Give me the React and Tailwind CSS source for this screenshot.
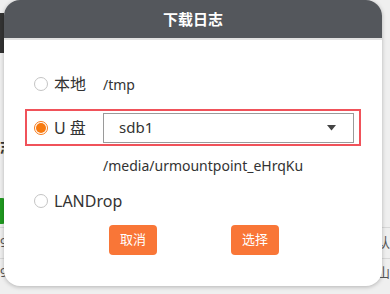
import React from "react";

function Radio({ checked }) {
  return checked ? (
    <span className="flex h-[14px] w-[14px] items-center justify-center rounded-full border border-[#f77a1a] bg-white">
      <span className="h-[10px] w-[10px] rounded-full bg-[#f77a0f]" />
    </span>
  ) : (
    <span className="h-[14px] w-[14px] rounded-full border border-[#c4c4c4] bg-white" />
  );
}

export default function App() {
  return (
    <div
      className="relative h-[294px] w-[390px] overflow-hidden bg-[#efefef]"
      style={{ fontFamily: '"Noto Sans", "Noto Sans CJK SC", sans-serif' }}
    >
      {/* background page fragments */}
      <div className="absolute left-0 top-[13px] h-[40px] w-[6px] bg-[#333]" />
      <div className="absolute left-0 top-[140px] text-[15px] font-bold leading-none text-[#333]">志</div>
      <div className="absolute left-0 top-[198px] h-[26px] w-[6px] rounded-r bg-[#1f9a1f]" />
      <div className="absolute left-0 right-0 top-[227px] h-px bg-[#d8d8d8]" />
      <div className="absolute left-0 right-0 top-[258px] h-px bg-[#d8d8d8]" />
      <div className="absolute left-0 top-[236px] text-[13px] leading-none text-[#555]">9</div>
      <div className="absolute left-0 top-[266px] text-[13px] leading-none text-[#555]">9</div>
      <div className="absolute right-0 top-[236px] text-[13px] leading-none text-[#555]">认</div>
      <div className="absolute right-0 top-[266px] text-[13px] leading-none text-[#555]">山</div>

      {/* dialog */}
      <div className="absolute left-[4px] top-0 flex h-[286px] w-[378px] flex-col overflow-hidden rounded-[16px] bg-white shadow-[0_1px_4px_rgba(0,0,0,0.25)]">
        <div className="flex h-[38px] items-center justify-center bg-[#54575c] text-[15px] font-bold text-white">
          下载日志
        </div>
        <div className="h-[2px] bg-[#e2e2e2]" />
        <div className="flex flex-1 flex-col pt-[32px]">
          <div className="flex h-[24px] items-center pl-[30px] text-[16px] text-[#333]">
            <Radio />
            <span className="ml-[6px] w-[49px]">本地</span>
            <span className="text-[14px]">/tmp</span>
          </div>
          <div className="mx-[21px] mt-[13px] flex h-[37px] items-center border-2 border-[#f0525a] pl-[7px]">
            <Radio checked />
            <span className="ml-[6px] w-[49px] text-[16px] text-[#333]">U 盘</span>
            <div className="flex h-[30px] w-[251px] items-center justify-between border border-[#9a9a9a] pl-[15px] pr-[17px] text-[15px] text-[#333]">
              <span>sdb1</span>
              <svg width="9" height="6" viewBox="0 0 9 6">
                <path d="M0 0 H9 L4.5 5.5 Z" fill="#444" />
              </svg>
            </div>
          </div>
          <div className="mt-[9px] pl-[99px] text-[14px] leading-[22px] text-[#333]">
            /media/urmountpoint_eHrqKu
          </div>
          <div className="mt-[13px] flex h-[22px] items-center pl-[30px] text-[16px] text-[#333]">
            <Radio />
            <span className="ml-[6px]">LANDrop</span>
          </div>
          <div className="mt-[13px] flex pl-[105px]">
            <button className="flex h-[30px] w-[48px] items-center justify-center rounded-[4px] bg-[#f97637] text-[13px] text-white">
              取消
            </button>
            <button className="ml-[74px] flex h-[30px] w-[48px] items-center justify-center rounded-[4px] bg-[#f97637] text-[13px] text-white">
              选择
            </button>
          </div>
        </div>
      </div>
    </div>
  );
}
